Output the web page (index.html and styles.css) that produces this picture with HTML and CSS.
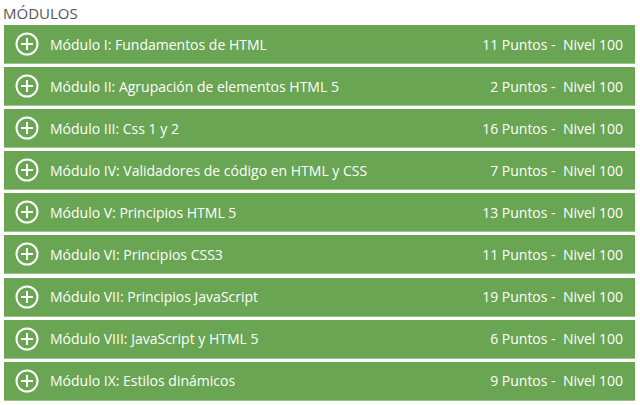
FILE: index.html
```html
<!DOCTYPE html>
<html lang="es">
<head>
  <meta charset="UTF-8" />
  <title>Módulos</title>
  <link rel="stylesheet" href="styles.css">
</head>
<body>
  <h2 class="title">MÓDULOS</h2>

  <ul class="modules">
    <li class="module">
      <svg class="icon" viewBox="0 0 24 24"><circle cx="12" cy="12" r="10.5"/><path d="M12 6v12M6 12h12"/></svg>
      <span class="name">Módulo I: Fundamentos de HTML</span>
      <span class="meta">11 Puntos -  Nivel 100</span>
    </li>
    <li class="module">
      <svg class="icon" viewBox="0 0 24 24"><circle cx="12" cy="12" r="10.5"/><path d="M12 6v12M6 12h12"/></svg>
      <span class="name">Módulo II: Agrupación de elementos HTML 5</span>
      <span class="meta">2 Puntos -  Nivel 100</span>
    </li>
    <li class="module">
      <svg class="icon" viewBox="0 0 24 24"><circle cx="12" cy="12" r="10.5"/><path d="M12 6v12M6 12h12"/></svg>
      <span class="name">Módulo III: Css 1 y 2</span>
      <span class="meta">16 Puntos -  Nivel 100</span>
    </li>
    <li class="module">
      <svg class="icon" viewBox="0 0 24 24"><circle cx="12" cy="12" r="10.5"/><path d="M12 6v12M6 12h12"/></svg>
      <span class="name">Módulo IV: Validadores de código en HTML y CSS</span>
      <span class="meta">7 Puntos -  Nivel 100</span>
    </li>
    <li class="module">
      <svg class="icon" viewBox="0 0 24 24"><circle cx="12" cy="12" r="10.5"/><path d="M12 6v12M6 12h12"/></svg>
      <span class="name">Módulo V: Principios HTML 5</span>
      <span class="meta">13 Puntos -  Nivel 100</span>
    </li>
    <li class="module">
      <svg class="icon" viewBox="0 0 24 24"><circle cx="12" cy="12" r="10.5"/><path d="M12 6v12M6 12h12"/></svg>
      <span class="name">Módulo VI: Principios CSS3</span>
      <span class="meta">11 Puntos -  Nivel 100</span>
    </li>
    <li class="module">
      <svg class="icon" viewBox="0 0 24 24"><circle cx="12" cy="12" r="10.5"/><path d="M12 6v12M6 12h12"/></svg>
      <span class="name">Módulo VII: Principios JavaScript</span>
      <span class="meta">19 Puntos -  Nivel 100</span>
    </li>
    <li class="module">
      <svg class="icon" viewBox="0 0 24 24"><circle cx="12" cy="12" r="10.5"/><path d="M12 6v12M6 12h12"/></svg>
      <span class="name">Módulo VIII: JavaScript y HTML 5</span>
      <span class="meta">6 Puntos -  Nivel 100</span>
    </li>
    <li class="module">
      <svg class="icon" viewBox="0 0 24 24"><circle cx="12" cy="12" r="10.5"/><path d="M12 6v12M6 12h12"/></svg>
      <span class="name">Módulo IX: Estilos dinámicos</span>
      <span class="meta">9 Puntos -  Nivel 100</span>
    </li>
  </ul>
</body>
</html>
```

FILE: styles.css
```css
body {
  margin: 0;
  padding: 4px 5px 0 4px;
  background: #fff;
  font-family: "Open Sans", "Noto Sans", sans-serif;
}

.title {
  margin: 0 0 3px -1px;
  font-size: 15px;
  font-weight: 400;
  line-height: 18px;
  color: #555;
}

.modules {
  list-style: none;
  margin: 0;
  padding: 0;
  display: flex;
  flex-direction: column;
  gap: 3.1px;
}

.module {
  display: flex;
  align-items: center;
  height: 38px;
  padding: 0 12px 0 11px;
  background: #69a553;
  border-bottom: 1px solid #9cc58c;
  color: #fff;
  font-size: 14px;
}

.icon {
  width: 24px;
  height: 24px;
  margin-right: 11px;
  fill: none;
  stroke: #fff;
  stroke-width: 2;
}

.name {
  flex: 1;
}

.meta {
  white-space: pre;
}
```
